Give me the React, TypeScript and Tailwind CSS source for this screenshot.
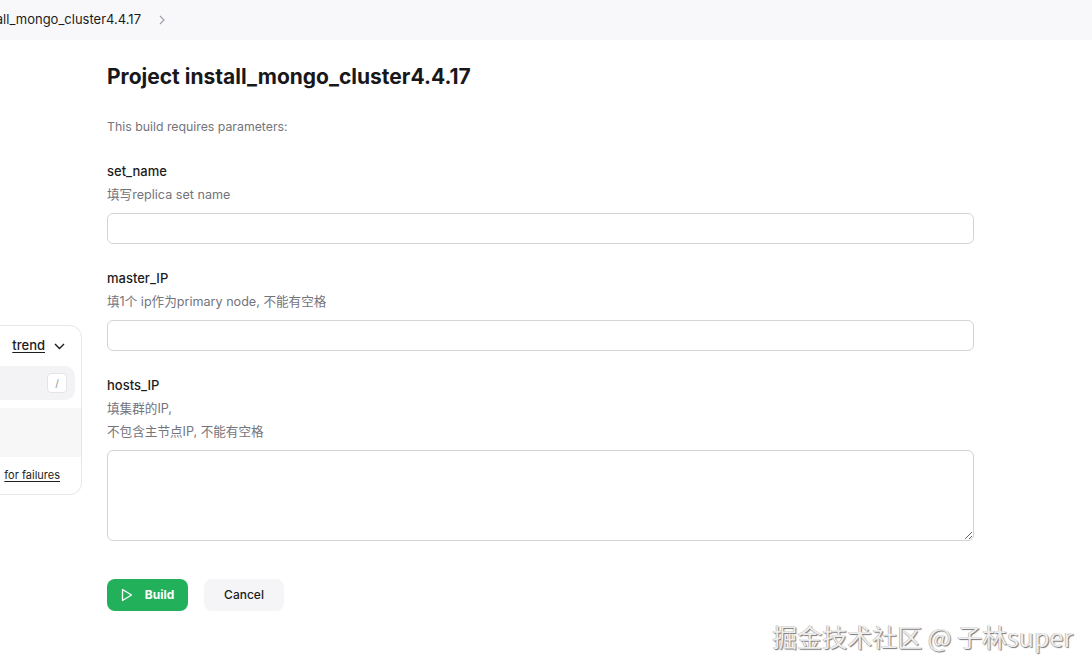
import React from "react";

const font = { fontFamily: 'Inter, "Noto Sans CJK SC", "Noto Sans", sans-serif' };

function Param({ name, desc, area }: { name: string; desc: React.ReactNode; area?: boolean }) {
  return (
    <div className="flex flex-col">
      <div className="text-[13px] leading-[23px] font-medium text-[#1c1c21]">{name}</div>
      <div className="text-[12.6px] leading-[23px] text-[#74747c]">{desc}</div>
      {area ? (
        <textarea className="mt-[7px] h-[91px] w-[867px] rounded-[6px] border border-[#d4d4d8] bg-white outline-none" />
      ) : (
        <input className="mt-[7px] h-[31px] w-[867px] rounded-[6px] border border-[#d4d4d8] bg-white outline-none" />
      )}
    </div>
  );
}

export default function App() {
  return (
    <div className="relative h-[669px] w-[1092px] overflow-hidden bg-white" style={font}>
      <header className="flex h-[40px] items-center bg-[#f8f8fa]">
        <div className="flex w-[141px] justify-end overflow-hidden">
          <span className="whitespace-nowrap text-[13px] text-[#1c1c21]">install_mongo_cluster4.4.17</span>
        </div>
        <svg className="ml-[17px]" width="8" height="10" viewBox="0 0 8 10" fill="none" stroke="#a1a1aa" strokeWidth="1.2">
          <path d="M2 1l4 4-4 4" />
        </svg>
      </header>

      <div className="flex">
        <aside className="flex w-[82px] shrink-0 justify-end overflow-hidden pt-[285px]">
          <div className="flex h-[170px] w-[300px] shrink-0 flex-col rounded-[12px] border border-[#e6e6ea] bg-white">
            <div className="flex h-[40px] items-center justify-end pr-[16px]">
              <span className="text-[13px] font-medium text-[#1c1c21] underline underline-offset-2">trend</span>
              <svg className="ml-[9px]" width="11" height="7" viewBox="0 0 11 7" fill="none" stroke="#1c1c21" strokeWidth="1.4">
                <path d="M1 1l4.5 4.5L10 1" />
              </svg>
            </div>
            <div className="mx-[6px] flex h-[34px] items-center justify-end rounded-[10px] bg-[#f3f3f6] pr-[8px]">
              <span className="flex h-[20px] w-[20px] items-center justify-center rounded-[4px] border border-[#e3e3e8] bg-white text-[10px] text-[#8a8a92]">/</span>
            </div>
            <div className="mt-[8px] h-[49px] bg-[#f7f7f8]" />
            <div className="flex h-[37px] items-center justify-end pr-[21px]">
              <span className="text-[11px] text-[#1c1c21] underline underline-offset-2">for failures</span>
            </div>
          </div>
        </aside>

        <main className="ml-[25px] flex flex-col pt-[23px]">
          <h1 className="text-[21px] leading-[28px] font-bold text-[#18181b]">Project install_mongo_cluster4.4.17</h1>
          <p className="mt-[24px] text-[12.3px] leading-[23px] text-[#74747c]">This build requires parameters:</p>
          <div className="mt-[22px] flex flex-col gap-[23px]">
            <Param name="set_name" desc="填写replica set name" />
            <Param name="master_IP" desc="填1个 ip作为primary node, 不能有空格" />
            <Param
              name="hosts_IP"
              desc={
                <>
                  填集群的IP,
                  <br />
                  不包含主节点IP, 不能有空格
                </>
              }
              area
            />
          </div>
          <div className="mt-[38px] flex gap-[16px]">
            <button className="flex h-[32px] w-[81px] items-center justify-center gap-[12px] rounded-[8px] bg-[#23b05a] text-[12px] font-bold text-white">
              <svg width="12" height="14" viewBox="0 0 12 14" fill="none" stroke="white" strokeWidth="1.3" strokeLinejoin="round">
                <path d="M1.5 1.5v11l9-5.5z" />
              </svg>
              Build
            </button>
            <button className="h-[32px] w-[80px] rounded-[8px] bg-[#f5f5f7] text-[12px] font-medium text-[#1c1c21]">Cancel</button>
          </div>
        </main>
      </div>

      <div
        className="absolute right-[19px] bottom-[18px] text-[25px] leading-[30px] text-[#eeeeee]"
        style={{ fontFamily: '"Noto Sans CJK SC", sans-serif', textShadow: "1px 1px 1px #777, -0.5px -0.5px 0 #aaa" }}
      >
        掘金技术社区 @ 子林super
      </div>
    </div>
  );
}
